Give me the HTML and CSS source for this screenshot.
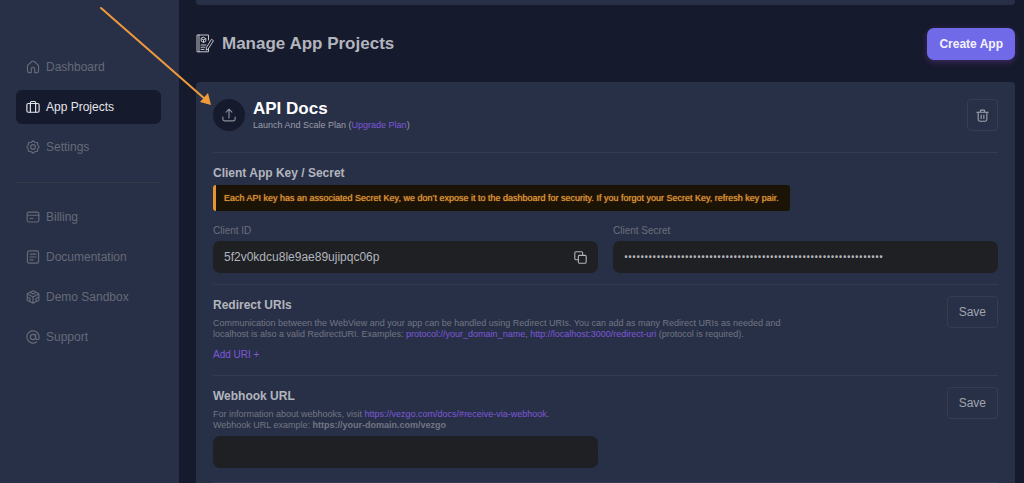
FILE: index.html
```html
<!DOCTYPE html>
<html lang="en">
<head>
<meta charset="utf-8">
<meta name="viewport" content="width=device-width, initial-scale=1">
<title>Manage App Projects</title>
<link rel="stylesheet" href="styles.css">
</head>
<body>
<div class="layout">
  <nav class="sidebar">
    <a class="nav-item" href="#">
      <svg class="icon" viewBox="0 0 24 24"><path d="M9 21.500H5.500a3 3 0 0 1-3-3V10.500a3 3 0 0 1 1-2.200l6.500-5.700a3 3 0 0 1 4 0l6.500 5.700a3 3 0 0 1 1 2.200v8a3 3 0 0 1-3 3H15v-6a3 3 0 0 0-6 0v6z"/></svg>
      Dashboard
    </a>
    <a class="nav-item active" href="#">
      <svg class="icon" viewBox="0 0 24 24"><rect x="1.500" y="6" width="21" height="15" rx="2.500"/><path d="M7.500 21V4.500a2 2 0 0 1 2-2h5a2 2 0 0 1 2 2V21"/></svg>
      App Projects
    </a>
    <a class="nav-item" href="#">
      <svg class="icon" viewBox="0 0 24 24"><path d="M12 1.300l3 2.500 4.600.6.600 4.600 2.500 3-2.500 3-.6 4.600-4.600.6-3 2.500-3-2.500-4.600-.6-.6-4.600-2.500-3 2.500-3 .6-4.600 4.600-.6z"/><circle cx="12" cy="12" r="4"/></svg>
      Settings
    </a>
    <hr class="nav-divider">
    <a class="nav-item" href="#">
      <svg class="icon" viewBox="0 0 24 24"><rect x="2" y="3.500" width="20" height="17" rx="3"/><path d="M2 9h20M7 14.500h5"/></svg>
      Billing
    </a>
    <a class="nav-item" href="#">
      <svg class="icon" viewBox="0 0 24 24"><rect x="2.500" y="1.500" width="19" height="21" rx="3"/><path d="M7 7h10M7 12h10M7 17h5"/></svg>
      Documentation
    </a>
    <a class="nav-item" href="#">
      <svg class="icon" viewBox="0 0 24 24"><path d="M12 1.300l10 5.200v11l-10 5.200-10-5.200v-11zM2 6.500l10 5.500 10-5.500M12 12v10.500M7 4l5 2.700L17 4M2 12l5 2.700v5.500M22 12l-5 2.700v5.500"/></svg>
      Demo Sandbox
    </a>
    <a class="nav-item" href="#">
      <svg class="icon" viewBox="0 0 24 24"><circle cx="12" cy="12" r="4.500"/><path d="M16.500 7.500v6a3 3 0 0 0 6 0V12A10.500 10.500 0 1 0 18 20.500"/></svg>
      Support
    </a>
  </nav>

  <main class="content">
    <div class="previous-card"></div>
    <header class="page-header">
      <svg class="page-icon" viewBox="0 0 18 19"><path d="M12.500 14.500v3.300H1V1h11.500v5M3 1v16.800"/><path d="M7.500 3.300l2.300 1.300v2.600L7.500 8.500 5.200 7.200V4.600zM5.200 4.600l2.300 1.300 2.300-1.300M7.500 6v2.500M5 11h5M5 13.200h4M5 15.400h3"/><path d="M15.800 5.500l1.700 1.200-5.300 8.300-2 1.300.2-2.400z"/></svg>
      <h1 class="page-title">Manage App Projects</h1>
      <button class="create-button" type="button">Create App</button>
    </header>

    <article class="card">
      <section class="app-head">
        <button class="upload-button" type="button" aria-label="Upload logo">
          <svg class="icon" viewBox="0 0 24 24"><path d="M12 17V2M7 7l5-5 5 5M1.500 15.500V19a3 3 0 0 0 3 3h15a3 3 0 0 0 3-3v-3.500"/></svg>
        </button>
        <div class="app-info">
          <h2 class="app-name">API Docs</h2>
          <p class="plan">Launch And Scale Plan (<a href="#">Upgrade Plan</a>)</p>
        </div>
        <button class="outline-button delete-button" type="button" aria-label="Delete app">
          <svg class="trash-icon" viewBox="0 0 24 24"><path d="M1.500 6h21M8 5.500V3.500a1.500 1.500 0 0 1 1.500-1.500h5a1.500 1.500 0 0 1 1.500 1.500v2M4 6v13.500a3 3 0 0 0 3 3h10a3 3 0 0 0 3-3V6M9.500 11v6.500M14.500 11v6.500"/></svg>
        </button>
      </section>

      <section class="keys">
        <h3 class="section-title">Client App Key / Secret</h3>
        <p class="notice">Each API key has an associated Secret Key, we don’t expose it to the dashboard for security. If you forgot your Secret Key, refresh key pair.</p>
        <div class="fields">
          <div class="field">
            <label for="client-id">Client ID</label>
            <div class="input-box">
              <input id="client-id" type="text" value="5f2v0kdcu8le9ae89ujipqc06p" readonly>
              <button class="copy-button" type="button" aria-label="Copy client ID">
                <svg class="copy-icon" viewBox="0 0 24 24"><rect x="8" y="8" width="14.500" height="14.500" rx="2"/><path d="M8 16H3.500a2 2 0 0 1-2-2V3.500a2 2 0 0 1 2-2H14a2 2 0 0 1 2 2V8"/></svg>
              </button>
            </div>
          </div>
          <div class="field">
            <label for="client-secret">Client Secret</label>
            <div class="input-box">
              <input id="client-secret" class="secret" type="password" value="0000000000000000000000000000000000000000000000000000000000000000" readonly>
            </div>
          </div>
        </div>
      </section>

      <section class="setting">
        <div class="setting-text">
          <h3 class="section-title">Redirect URIs</h3>
          <p class="help">Communication between the WebView and your app can be handled using Redirect URIs. You can add as many Redirect URIs as needed and<br>localhost is also a valid RedirectURI. Examples: <a href="#">protocol://your_domain_name</a>, <a href="#">http://localhost:3000/redirect-uri</a> (protocol is required).</p>
          <button class="add-uri" type="button">Add URI +</button>
        </div>
        <button class="outline-button" type="button">Save</button>
      </section>

      <section class="setting">
        <div class="setting-text">
          <h3 class="section-title"><label for="webhook-url">Webhook URL</label></h3>
          <p class="help">For information about webhooks, visit <a href="#">https://vezgo.com/docs/#receive-via-webhook</a>.<br>Webhook URL example: <b>https://your-domain.com/vezgo</b></p>
        </div>
        <button class="outline-button" type="button">Save</button>
        <div class="fields webhook-fields">
          <div class="input-box"><input id="webhook-url" type="text"></div>
        </div>
      </section>
    </article>
  </main>
</div>
<svg class="pointer-arrow" viewBox="0 0 112 100" aria-hidden="true"><path class="shaft" d="M1 1l104 91"/><path class="head" d="M111 98l-11-3 8-9z"/></svg>
</body>
</html>
```
FILE: styles.css
```css
* {
  box-sizing: border-box;
}

body {
  margin: 0;
  background: #161a2d;
  color: #b3b5bd;
  font-family: "Liberation Sans", Arial, sans-serif;
  font-size: 12px;
}

h1, h2, h3, p {
  margin: 0;
}

a {
  color: #7c58d8;
  text-decoration: none;
}

button, input {
  font: inherit;
  color: inherit;
}

button {
  padding: 0;
  border: 0;
  background: none;
  cursor: pointer;
}

svg {
  fill: none;
  stroke: currentColor;
  stroke-width: 2;
  stroke-linecap: round;
  stroke-linejoin: round;
  flex: none;
}

.icon {
  width: 14px;
  height: 14px;
}

.layout {
  display: grid;
  grid-template-columns: 179px 1fr;
  min-height: 100vh;
}

.sidebar {
  display: flex;
  flex-direction: column;
  gap: 6px;
  padding: 50px 18px 0 16px;
  background: #283048;
}

.nav-item {
  display: flex;
  align-items: center;
  gap: 6px;
  height: 34px;
  padding: 0 10px;
  border-radius: 6px;
  color: #666a77;
}

.nav-item.active {
  background: #161a2d;
  color: #e4e5e9;
}

.nav-divider {
  width: 100%;
  margin: 12px 0 11px;
  border: 0;
  border-top: 1px solid #343b4b;
}

.content {
  display: flex;
  flex-direction: column;
  padding: 0 9px 0 17px;
}

.previous-card {
  height: 5px;
  border-radius: 0 0 4px 4px;
  background: #283048;
}

.page-header {
  display: flex;
  align-items: center;
  gap: 8px;
  height: 77px;
}

.page-icon {
  width: 18px;
  height: 19px;
  stroke-width: 1;
  color: #c3c4ca;
}

.page-title {
  flex: 1;
  font-size: 17px;
  line-height: 20px;
}

.create-button {
  height: 32px;
  padding: 0 12px;
  border-radius: 7px;
  background: #7069e8;
  box-shadow: 0 2px 6px #8040b066;
  color: #f4f3fd;
  font-weight: bold;
}

.card {
  flex: 1;
  padding: 17px 17px 0;
  border-radius: 4px 4px 0 0;
  background: #283048;
}

.app-head {
  display: flex;
  align-items: flex-start;
  gap: 8px;
  padding-bottom: 21px;
  border-bottom: 1px solid #343b50;
}

.upload-button {
  display: flex;
  align-items: center;
  justify-content: center;
  width: 32px;
  height: 32px;
  border-radius: 50%;
  background: #161a2d;
  color: #8b8e98;
}

.app-info {
  flex: 1;
}

.app-name {
  color: #fff;
  font-size: 17px;
  line-height: 20px;
}

.plan {
  color: #9a9da7;
  font-size: 9px;
  line-height: 12px;
}

.outline-button {
  height: 32px;
  padding: 0 11px;
  border: 1px solid #363d50;
  border-radius: 4px;
  color: #a0a3ad;
}

.delete-button {
  display: flex;
  align-items: center;
  padding: 0 8px;
}

.trash-icon {
  width: 13px;
  height: 13px;
}

.section-title {
  font-size: 12px;
  line-height: 14px;
}

.keys {
  padding: 13px 0 11px;
  border-bottom: 1px solid #343b50;
}

.notice {
  width: fit-content;
  margin: 5px 0 14px;
  padding: 7px 11px 7px 8px;
  border-left: 3px solid #e8952f;
  border-radius: 3px;
  background: #1c1307;
  color: #de9336;
  font-size: 9px;
  line-height: 12px;
  text-shadow: 0 0 1px #de9336;
}

.fields {
  display: grid;
  grid-template-columns: 1fr 1fr;
  gap: 15px;
}

.field label {
  display: block;
  margin-bottom: 4px;
  color: #6b6f7b;
  font-size: 10px;
  line-height: 12px;
}

.input-box {
  display: flex;
  align-items: center;
  height: 32px;
  padding: 0 11px;
  border-radius: 7px;
  background: #1e2024;
}

.input-box input {
  flex: 1;
  min-width: 0;
  padding: 0;
  border: 0;
  outline: 0;
  background: none;
}

.input-box .secret {
  font-family: Roboto, sans-serif;
}

.copy-button {
  display: flex;
}

.copy-icon {
  width: 13px;
  height: 13px;
}

.setting {
  display: grid;
  grid-template-columns: 1fr auto;
  align-items: start;
  padding: 11px 0 14px;
  border-bottom: 1px solid #343b50;
}

.setting-text {
  padding-top: 2px;
}

.help {
  margin-top: 6px;
  color: #727682;
  font-size: 9px;
  line-height: 11px;
}

.add-uri {
  display: block;
  margin-top: 8px;
  color: #7c58d8;
  font-size: 10px;
  line-height: 13px;
}

.webhook-fields {
  grid-column: 1 / -1;
  margin-top: 5px;
}

.pointer-arrow {
  position: absolute;
  top: 7px;
  left: 100px;
  width: 112px;
  height: 100px;
  pointer-events: none;
}

.shaft {
  stroke: #f09a3a;
}

.head {
  fill: #f09a3a;
  stroke: none;
}
```
